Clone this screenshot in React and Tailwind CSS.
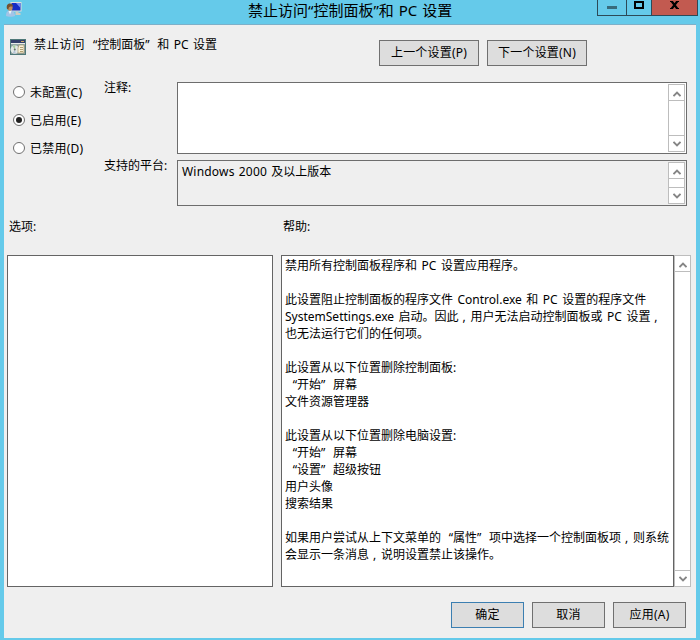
import React from "react";

// Splits a line so that quotes and commas take a full character cell.
function Line({ children }) {
  return (
    <div className="h-[17px] leading-[17px] whitespace-pre [word-spacing:1.4px]">
      {children.split(/([“”，])/).map((part, i) => {
        if (part === "“") return <span key={i} className="inline-block w-3 text-right">“</span>;
        if (part === "”") return <span key={i} className="inline-block w-3 text-left">”</span>;
        if (part === "，") return <span key={i} className="inline-block w-3 pr-px text-center">,</span>;
        return <span key={i}>{part}</span>;
      })}
    </div>
  );
}

function Chevron({ down }) {
  return (
    <svg width="8" height="6" viewBox="0 0 8 6" fill="none" stroke="#858585" strokeWidth="1.9">
      <path d={down ? "M0.5 0.8L4 4.3L7.5 0.8" : "M0.5 5.2L4 1.7L7.5 5.2"} />
    </svg>
  );
}

function ScrollBar({ className }) {
  return (
    <div className={"flex w-[17px] shrink-0 flex-col justify-between border border-[#bdbdbd] bg-white " + className}>
      <div className="flex h-4 items-center justify-center border-b border-[#bdbdbd] pt-0.5"><Chevron /></div>
      <div className="flex h-4 items-center justify-center border-t border-[#bdbdbd]"><Chevron down /></div>
    </div>
  );
}

function Radio({ label, checked }) {
  return (
    <div className="flex h-7 items-center">
      <span className="mr-[5px] flex size-3 items-center justify-center rounded-full border border-[#707070] bg-white">
        {checked && <span className="size-1.5 rounded-full bg-[#212121]" />}
      </span>
      <span className="tracking-[0.25px] whitespace-nowrap">{label}</span>
    </div>
  );
}

function Button({ children, className }) {
  return (
    <button className={"h-[26px] border bg-[#dddddd] pb-px text-center tracking-[0.2px] whitespace-nowrap " + className}>
      {children}
    </button>
  );
}

function UserMonitorIcon() {
  return (
    <svg width="16" height="16" viewBox="0 0 16 16">
      <rect x="4.500" y="1" width="11" height="9.500" fill="#dfe0da" />
      <rect x="5.500" y="2" width="9" height="7.500" fill="#142cc4" />
      <path d="M10 2h4.500v5z" fill="#6f8af0" />
      <path d="M9.500 10.500h3v1.500h2v2h-5z" fill="#cfccc0" />
      <path d="M0 15c0-4 1.500-5.500 4-5.500S9 11 9 15c-2 1-7 1-9 0z" fill="#a3c4e6" />
      <path d="M2.500 10l1.500 3.500L5.500 10z" fill="#f0f5fa" />
      <ellipse cx="4" cy="6.500" rx="2.600" ry="3.200" fill="#c08d5c" />
      <path d="M1 8C0 4 2 2.500 4 2.500S7 4 7 5.500C5 5.500 2.500 5 2.500 8.500z" fill="#74512f" />
    </svg>
  );
}

function PolicyIcon() {
  return (
    <svg width="16" height="16" viewBox="0 0 16 16">
      <rect width="16" height="16" fill="#4f7878" />
      <rect x="1" y="1" width="14" height="3" fill="#34406b" />
      <rect x="11" y="2" width="3" height="1" fill="#c7a864" />
      <rect x="1" y="4" width="14" height="1.500" fill="#e9ecea" />
      <rect x="1" y="5.500" width="14" height="9.500" fill="#8d9f9f" />
      <circle cx="4.800" cy="10.500" r="4.300" fill="#e3e9e6" />
      <path d="M4.800 10.500L2.500 7l3-1z" fill="#a9cf9f" />
      <path d="M4.800 10.500l1 4-3-.5z" fill="#b9c4d8" />
      <circle cx="4.800" cy="10.500" r="1" fill="#64736b" />
      <path d="M9 6h5v8H8V9z" fill="#f7f0d7" stroke="#a08d63" strokeWidth=".6" />
      <path d="M10 8.500h3M10 10.500h3M10 12.500h3" stroke="#b2a072" />
    </svg>
  );
}

const helpLines = [
  "禁用所有控制面板程序和 PC 设置应用程序。",
  "",
  "此设置阻止控制面板的程序文件 Control.exe 和 PC 设置的程序文件",
  "SystemSettings.exe 启动。因此，用户无法启动控制面板或 PC 设置，",
  "也无法运行它们的任何项。",
  "",
  "此设置从以下位置删除控制面板:",
  "“开始”屏幕",
  "文件资源管理器",
  "",
  "此设置从以下位置删除电脑设置:",
  "“开始”屏幕",
  "“设置”超级按钮",
  "用户头像",
  "搜索结果",
  "",
  "如果用户尝试从上下文菜单的“属性”项中选择一个控制面板项，则系统",
  "会显示一条消息，说明设置禁止该操作。",
];

export default function App() {
  return (
    <div
      lang="zh-CN"
      className="flex h-[640px] w-[700px] flex-col overflow-hidden bg-[#65caea] font-['Noto_Sans','Noto_Sans_CJK_SC',sans-serif] text-[12px] leading-[17px] text-black"
    >
      <header className="flex h-6 shrink-0 items-start">
        <div className="w-[248px] pl-1.5 pt-px"><UserMonitorIcon /></div>
        <h1 className="w-[349px] text-[15px] leading-5 whitespace-pre [word-spacing:1px]">禁止访问“控制面板”和 PC 设置</h1>
        <div className="flex h-4 w-[101px] border-r border-b border-l border-[#2c4a58]">
          <div className="flex w-7 justify-center pt-1.5"><span className="h-[3px] w-2.5 bg-[#386b7c]" /></div>
          <div className="flex w-[26px] justify-center border-x border-[#2c4a58] pt-px"><span className="h-2 w-2.5 border-2 border-black" /></div>
          <div className="flex flex-1 justify-center bg-[#c25a50] pt-px">
            <svg width="9" height="8" viewBox="0 0 9 8" stroke="#000" strokeWidth="2.200"><path d="M1.500 0l6 8M7.500 0l-6 8" /><path d="M0 .5h3M6 .5h3M0 7.500h3M6 7.500h3" strokeWidth="1" /></svg>
          </div>
        </div>
      </header>

      <main className="mx-1 flex h-[614px] flex-col border-t border-[#7db0c9] bg-[#efefef]">
        <div className="flex h-[57px] shrink-0">
          <div className="w-[30px] pl-1.5 pt-3.5"><PolicyIcon /></div>
          <div className="flex w-[345px] pt-[11px]">
            <span className="tracking-[0.8px]">禁止访问</span>
            <Line>“控制面板”和 PC 设置</Line>
          </div>
          <div className="flex gap-2 pt-[15px]">
            <Button className="w-[100px] border-[#707070]">上一个设置(P)</Button>
            <Button className="w-[100px] border-[#707070]">下一个设置(N)</Button>
          </div>
        </div>

        <div className="flex h-[124px] shrink-0">
          <div className="-mt-1 w-[100px] pl-[9px]">
            <Radio label="未配置(C)" />
            <Radio label="已启用(E)" checked />
            <Radio label="已禁用(D)" />
          </div>
          <div className="flex w-[73px] flex-col gap-[61px]">
            <div className="-mt-[3px]">注释:</div>
            <div className="whitespace-nowrap">支持的平台:</div>
          </div>
          <div className="flex w-[510px] flex-col gap-1.5">
            <div className="flex h-[72px] justify-end border border-[#6d6d6d] bg-white p-px">
              <ScrollBar className="h-[68px]" />
            </div>
            <div className="flex h-[46px] justify-between border border-[#6d6d6d] p-px">
              <div className="pl-[3px] pt-px [word-spacing:0.8px]"><span className="tracking-[0.2px]">Windows 2000 </span>及以上版本</div>
              <ScrollBar className="h-[42px]" />
            </div>
          </div>
        </div>

        <div className="flex h-[49px] shrink-0 pt-3">
          <div className="w-[274px] pl-[5px]">选项:</div>
          <div className="pl-[5px]">帮助:</div>
        </div>

        <div className="flex h-[332px] shrink-0 pl-[3px]">
          <div className="mr-2 w-[266px] border border-[#646464] bg-white" />
          <div className="w-[393px] border border-[#646464] bg-white pl-[3px] pt-px">
            {helpLines.map((line, i) => <Line key={i}>{line}</Line>)}
          </div>
          <ScrollBar className="h-[332px]" />
        </div>

        <div className="flex justify-end gap-2 pr-[10px] pt-[15px]">
          <Button className="w-[73px] border-[#3c7fb1]">确定</Button>
          <Button className="w-[73px] border-[#707070]">取消</Button>
          <Button className="w-[73px] border-[#707070]">应用(A)</Button>
        </div>
      </main>
    </div>
  );
}
